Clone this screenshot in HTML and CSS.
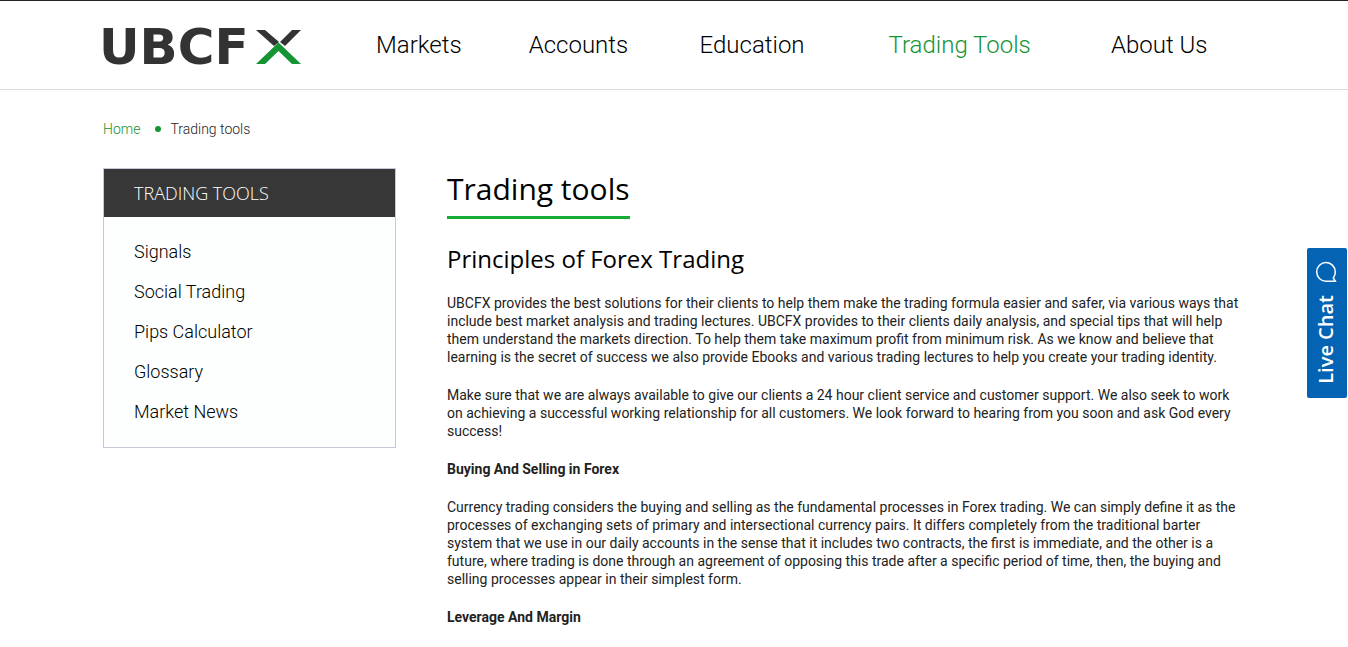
FILE: index.html
```html
<!DOCTYPE html>
<html lang="en">
<head>
    <meta charset="UTF-8">
    <meta name="viewport" content="width=device-width, initial-scale=1.0">
    <title>Trading tools - UBCFX</title>
    <link rel="stylesheet" href="styles.css">
</head>
<body>

    <header class="header">
        <div class="container header-inner">
            <a href="#" class="logo" aria-label="UBCFX">
                <svg width="208" height="62" viewBox="-8 -13 208 62">
                    <text class="logo-text" x="-4" y="35">UBCF</text>
                    <path fill="#333" d="M153 1h9l14 12-5 4zM189 1h9l-16 16-5-4z"/>
                    <path fill="#159434" d="M175.500 13.500L198 35h-9l-13.500-13L162 35h-9z"/>
                </svg>
            </a>
            <nav class="menu">
                <a href="#">Markets</a>
                <a href="#">Accounts</a>
                <a href="#">Education</a>
                <a href="#" class="active">Trading Tools</a>
                <a href="#">About Us</a>
            </nav>
        </div>
    </header>

    <div class="container">
        <div class="breadcrumb">
            <a href="#">Home</a>
            <span class="dot"></span>
            <span>Trading tools</span>
        </div>

        <div class="main">
            <aside class="sidebar">
                <h3>TRADING TOOLS</h3>
                <ul>
                    <li><a href="#">Signals</a></li>
                    <li><a href="#">Social Trading</a></li>
                    <li><a href="#">Pips Calculator</a></li>
                    <li><a href="#">Glossary</a></li>
                    <li><a href="#">Market News</a></li>
                </ul>
            </aside>

            <div class="content">
                <h1>Trading tools</h1>
                <h2>Principles of Forex Trading</h2>
                <p>UBCFX provides the best solutions for their clients to help them make the trading formula easier and safer, via various ways that include best market analysis and trading lectures. UBCFX provides to their clients daily analysis, and special tips that will help them understand the markets direction. To help them take maximum profit from minimum risk. As we know and believe that learning is the secret of success we also provide Ebooks and various trading lectures to help you create your trading identity.</p>
                <p>Make sure that we are always available to give our clients a 24 hour client service and customer support. We also seek to work on achieving a successful working relationship for all customers. We look forward to hearing from you soon and ask God every success!</p>
                <p><strong>Buying And Selling in Forex</strong></p>
                <p>Currency trading considers the buying and selling as the fundamental processes in Forex trading. We can simply define it as the processes of exchanging sets of primary and intersectional currency pairs. It differs completely from the traditional barter system that we use in our daily accounts in the sense that it includes two contracts, the first is immediate, and the other is a future, where trading is done through an agreement of opposing this trade after a specific period of time, then, the buying and selling processes appear in their simplest form.</p>
                <p><strong>Leverage And Margin</strong></p>
            </div>
        </div>
    </div>

    <button type="button" class="live-chat">
        <svg width="22" height="22" viewBox="0 0 22 22" fill="none" stroke="#fff" stroke-width="1.500">
            <path d="M11 20.200A9.300 9.300 0 1 1 20.300 11c0 2.500-.8 4.300-2 6l2 3.200z"/>
        </svg>
        <span>Live Chat</span>
    </button>

</body>
</html>
```
FILE: styles.css
```css
* {
    box-sizing: border-box;
}

body {
    margin: 0;
    border-top: 1px solid #222;
    background-color: #fff;
    color: #222;
    font-family: Roboto, Arial, sans-serif;
    font-size: 14px;
    line-height: 18px;
}

a {
    color: inherit;
    text-decoration: none;
}

.container {
    max-width: 1142px;
    margin: 0 auto;
}

/* header */
.header {
    border-bottom: 1px solid #ddd;
}

.header-inner {
    display: flex;
    align-items: center;
    height: 88px;
}

.logo {
    flex: 0 0 236px;
    padding-top: 4px;
}

.logo svg {
    display: block;
    margin-left: -8px;
}

.logo-text {
    font-family: "DejaVu Sans", Verdana, sans-serif;
    font-size: 50px;
    font-weight: bold;
    fill: #333;
}

.menu {
    flex: 1;
    display: grid;
    grid-template-columns: 40fr 40fr 47fr 57fr 43fr;
    text-align: center;
    color: #000;
    font-size: 24px;
    font-weight: 300;
    line-height: 32px;
}

.menu a:hover,
.menu .active {
    color: #159434;
}

/* breadcrumb */
.breadcrumb {
    display: flex;
    align-items: center;
    padding: 30px 0;
    font-weight: 300;
}

.breadcrumb a {
    color: #159434;
}

.dot {
    width: 6px;
    height: 6px;
    margin: 0 9px 0 15px;
    border-radius: 50%;
    background-color: #159434;
}

.main {
    display: flex;
    align-items: flex-start;
    gap: 51px;
}

/* sidebar */
.sidebar {
    flex: 0 0 293px;
    border: 1px solid #c8c8dc;
    background-color: #fdfffe;
    color: #000;
    font-size: 18px;
    font-weight: 300;
}

.sidebar h3 {
    margin: 0;
    padding: 0 30px;
    background-color: #373737;
    color: #fff;
    font-family: "Open Sans", sans-serif;
    font-size: 18px;
    font-weight: 300;
    line-height: 48px;
}

.sidebar ul {
    margin: 0;
    padding: 15px 30px;
    list-style: none;
    line-height: 40px;
}

/* content */
.content {
    flex: 1;
}

h1, h2 {
    color: #000;
    font-family: "Open Sans", sans-serif;
    font-weight: 400;
}

h1 {
    width: fit-content;
    margin: 0 0 24px;
    padding-bottom: 6px;
    border-bottom: 3px solid #15ad35;
    font-size: 30px;
    line-height: 42px;
}

h2 {
    margin: 0 0 20px;
    font-size: 24px;
    line-height: 31px;
}

p {
    margin: 0 0 20px;
}

/* live chat tab */
.live-chat {
    position: fixed;
    top: 248px;
    right: 1px;
    display: flex;
    flex-direction: column;
    align-items: center;
    gap: 12px;
    width: 40px;
    height: 150px;
    padding: 13px 2px 13px 0;
    border: none;
    border-radius: 2px;
    background-color: #0463b3;
    color: #fff;
    font-family: "Open Sans", sans-serif;
    font-size: 20px;
    font-weight: 600;
    line-height: 26px;
    cursor: pointer;
}

.live-chat span {
    writing-mode: vertical-rl;
    transform: rotate(180deg);
}
```
